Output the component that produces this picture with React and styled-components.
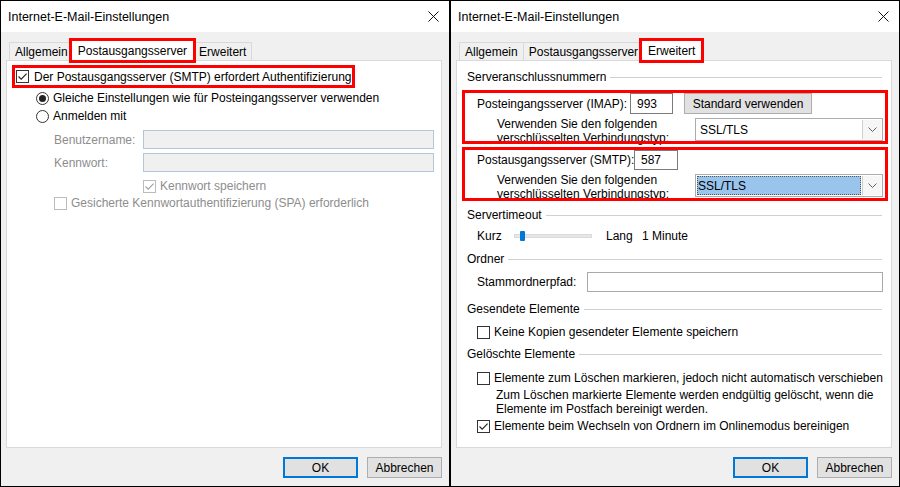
import React from "react";
import styled, { createGlobalStyle, css } from "styled-components";

const GlobalStyle = createGlobalStyle`
  * { box-sizing: border-box; }
  html, body { margin: 0; padding: 0; background: #000; }
  body {
    font-family: "Liberation Sans", Arial, sans-serif;
    font-size: 12px;
    color: #000;
  }
`;

const Screen = styled.div`
  width: 900px;
  height: 487px;
  padding: 1px;
  display: flex;
  gap: 2px;
  background: #000;
`;

const Dialog = styled.section`
  width: 448px;
  height: 485px;
  display: flex;
  flex-direction: column;
  background: #f0f0f0;
`;

const TitleBar = styled.header`
  height: 31px;
  flex: none;
  background: #fff;
  display: flex;
  align-items: center;
  justify-content: space-between;
  padding: 0 10px 0 7px;
`;

const Title = styled.h1`
  margin: 0;
  font-size: 12.5px;
  font-weight: 400;
`;

const CloseIcon = styled.svg`
  width: 11px;
  height: 11px;
  display: block;
`;

const Body = styled.div`
  flex: 1;
  display: flex;
  flex-direction: column;
  padding: 8px 7px 8px 5px;
`;

const TabStrip = styled.div`
  height: 20px;
  flex: none;
  display: flex;
  align-items: flex-end;
  padding-left: 4px;
  position: relative;
  z-index: 1;
`;

const Tab = styled.div`
  height: 18px;
  display: flex;
  align-items: center;
  padding: 0 5px;
  margin-left: -1px;
  border: 1px solid #d9d9d9;
  border-bottom: none;
  background: #f0f0f0;
  white-space: nowrap;
  ${(p) =>
    p.$active &&
    css`
      height: 21px;
      margin: 0 0 -1px -3px;
      padding: 0 6px;
      background: #fff;
      position: relative;
      z-index: 2;
      outline: 3px solid #f00;
      outline-offset: -1px;
    `}
`;

const Panel = styled.div`
  height: 388px;
  flex: none;
  background: #fff;
  border: 1px solid #d9d9d9;
  display: flex;
  flex-direction: column;
`;

const ButtonRow = styled.div`
  display: flex;
  justify-content: flex-end;
  gap: 9px;
  margin-top: 9px;
`;

const DialogButton = styled.button`
  width: 75px;
  height: 21px;
  padding: 0;
  font: inherit;
  color: #000;
  background: #e1e1e1;
  border: 1px solid #adadad;
  ${(p) =>
    p.$default &&
    css`
      border: 2px solid #0078d7;
    `}
`;

/* ---------- controls ---------- */

const BoxMark = styled.span`
  width: 13px;
  height: 13px;
  flex: none;
  display: flex;
  align-items: center;
  justify-content: center;
  background: #fff;
  border: 1px solid ${(p) => (p.$disabled ? "#bcbcbc" : "#333")};
`;

const CheckBox = ({ checked, disabled }) => (
  <BoxMark $disabled={disabled}>
    {checked && (
      <svg width="11" height="11" viewBox="0 0 11 11">
        <path
          d="M1.5 5.5 L4.2 8.2 L9.6 2.6"
          fill="none"
          stroke={disabled ? "#a0a0a0" : "#222"}
          strokeWidth="1.1"
        />
      </svg>
    )}
  </BoxMark>
);

const RadioMark = styled.span`
  width: 13px;
  height: 13px;
  flex: none;
  border-radius: 50%;
  border: 1px solid #333;
  background: #fff;
  display: flex;
  align-items: center;
  justify-content: center;
  &::after {
    content: "";
    width: 7px;
    height: 7px;
    border-radius: 50%;
    background: ${(p) => (p.$checked ? "#222" : "transparent")};
  }
`;

/* ---------- left panel ---------- */

const AuthLine = styled.label`
  align-self: flex-start;
  display: flex;
  align-items: center;
  gap: 5px;
  height: 17px;
  margin: 7px 0 0 8px;
  padding: 0 1px 0 1px;
  outline: 3px solid #f00;
  white-space: nowrap;
`;

const OptionRow = styled.label`
  display: flex;
  align-items: center;
  gap: 4px;
  height: 18px;
  margin: ${(p) => p.$mt || 0}px 0 0 29px;
`;

const FieldRow = styled.div`
  display: flex;
  align-items: center;
  height: 19px;
  margin: ${(p) => p.$mt}px 7px 0 47px;
`;

const FieldLabel = styled.span`
  width: 89px;
  flex: none;
  color: #8d8d8d;
`;

const DisabledInput = styled.div`
  flex: 1;
  height: 19px;
  background: #f0f0f0;
  border: 1px solid #b4c6d8;
`;

const CheckRow = styled.label`
  display: flex;
  align-items: center;
  gap: 4px;
  height: 16px;
  margin: ${(p) => p.$mt}px 0 0 ${(p) => p.$indent}px;
  color: ${(p) => (p.$disabled ? "#8d8d8d" : "#000")};
  white-space: nowrap;
`;

/* ---------- right panel ---------- */

const GroupHeader = styled.div`
  display: flex;
  align-items: center;
  gap: 4px;
  height: 16px;
  margin: ${(p) => p.$mt}px 9px 0 10px;
  white-space: nowrap;
  &::after {
    content: "";
    flex: 1;
    height: 1px;
    background: #d0d0d0;
  }
`;

const PortGroup = styled.div`
  display: flex;
  flex-direction: column;
  gap: 4px;
  margin: ${(p) => p.$mt}px 6px 0 8px;
  padding-bottom: ${(p) => p.$pb || 0}px;
  outline: 3px solid #f00;
`;

const PortRow = styled.div`
  display: flex;
  align-items: center;
  height: ${(p) => p.$h}px;
  padding-left: 12px;
`;

const PortLabel = styled.span`
  width: ${(p) => p.$w}px;
  flex: none;
  white-space: nowrap;
`;

const PortInput = styled.div`
  width: ${(p) => p.$w}px;
  height: ${(p) => p.$h}px;
  flex: none;
  display: flex;
  align-items: center;
  padding-left: 6px;
  background: #fff;
  border: 1px solid #7a7a7a;
`;

const StandardButton = styled.button`
  width: 128px;
  height: 21px;
  margin-left: 11px;
  padding: 0;
  font: inherit;
  color: #000;
  background: #e1e1e1;
  border: 1px solid #adadad;
`;

const EncRow = styled.div`
  display: flex;
  align-items: center;
  height: 23px;
  padding-left: 32px;
`;

const EncText = styled.div`
  width: 198px;
  flex: none;
  line-height: 14px;
  padding-top: 3px;
  white-space: nowrap;
`;

const Select = styled.div`
  width: 188px;
  height: 23px;
  flex: none;
  display: flex;
  background: #fff;
  border: 1px solid #acacac;
`;

const SelectValue = styled.div`
  flex: 1;
  display: flex;
  align-items: center;
  padding-left: 4px;
  ${(p) =>
    p.$highlight &&
    css`
      margin: 1px 0 1px 1px;
      padding-left: 1px;
      background: #99c4ec;
      outline: 1px dotted #555;
      outline-offset: -1px;
    `}
`;

const SelectArrow = styled.div`
  width: 19px;
  margin: 1px;
  display: flex;
  align-items: center;
  justify-content: center;
  background: #f6f6f6;
  border-left: 1px solid #cfcfcf;
`;

const Chevron = () => (
  <svg width="9" height="5" viewBox="0 0 9 5">
    <path d="M0.5 0.5 L4.5 4.5 L8.5 0.5" fill="none" stroke="#606060" strokeWidth="1" />
  </svg>
);

const SliderRow = styled.div`
  display: flex;
  align-items: center;
  height: 16px;
  margin: 5px 0 0 20px;
`;

const SliderLabel = styled.span`
  width: ${(p) => p.$w}px;
  flex: none;
`;

const Track = styled.div`
  position: relative;
  width: 78px;
  height: 4px;
  margin-right: 14px;
  background: #e7e7e7;
  border: 1px solid #dadada;
`;

const Thumb = styled.div`
  position: absolute;
  left: 5px;
  top: -4px;
  width: 5px;
  height: 10px;
  border-radius: 1px;
  background: #0078d7;
`;

const PathRow = styled.div`
  display: flex;
  align-items: center;
  height: 20px;
  margin: 5px 8px 0 20px;
`;

const PathLabel = styled.span`
  width: 110px;
  flex: none;
`;

const PathInput = styled.div`
  flex: 1;
  height: 20px;
  background: #fff;
  border: 1px solid #a9a9a9;
`;

const Note = styled.p`
  margin: 2px 0 0 39px;
  line-height: 14px;
`;

/* ---------- dialog shell ---------- */

const tabs = ["Allgemein", "Postausgangsserver", "Erweitert"];

const DialogShell = ({ active, children }) => (
  <Dialog>
    <TitleBar>
      <Title>Internet-E-Mail-Einstellungen</Title>
      <CloseIcon viewBox="0 0 11 11">
        <path d="M0.5 0.5 L10.5 10.5 M10.5 0.5 L0.5 10.5" stroke="#111" strokeWidth="1" />
      </CloseIcon>
    </TitleBar>
    <Body>
      <TabStrip>
        {tabs.map((t) => (
          <Tab key={t} $active={t === active}>
            {t}
          </Tab>
        ))}
      </TabStrip>
      <Panel>{children}</Panel>
      <ButtonRow>
        <DialogButton $default>OK</DialogButton>
        <DialogButton>Abbrechen</DialogButton>
      </ButtonRow>
    </Body>
  </Dialog>
);

export default function App() {
  return (
    <>
      <GlobalStyle />
      <Screen>
        <DialogShell active="Postausgangsserver">
          <AuthLine>
            <CheckBox checked />
            <span>Der Postausgangsserver (SMTP) erfordert Authentifizierung</span>
          </AuthLine>
          <OptionRow $mt={4}>
            <RadioMark $checked />
            <span>Gleiche Einstellungen wie für Posteingangsserver verwenden</span>
          </OptionRow>
          <OptionRow>
            <RadioMark />
            <span>Anmelden mit</span>
          </OptionRow>
          <FieldRow $mt={5}>
            <FieldLabel>Benutzername:</FieldLabel>
            <DisabledInput />
          </FieldRow>
          <FieldRow $mt={4}>
            <FieldLabel>Kennwort:</FieldLabel>
            <DisabledInput />
          </FieldRow>
          <CheckRow $mt={6} $indent={136} $disabled>
            <CheckBox checked disabled />
            <span>Kennwort speichern</span>
          </CheckRow>
          <CheckRow $mt={1} $indent={47} $disabled>
            <CheckBox disabled />
            <span>Gesicherte Kennwortauthentifizierung (SPA) erforderlich</span>
          </CheckRow>
        </DialogShell>

        <DialogShell active="Erweitert">
          <GroupHeader $mt={8}>Serveranschlussnummern</GroupHeader>
          <PortGroup $mt={8}>
            <PortRow $h={21}>
              <PortLabel $w={153}>Posteingangsserver (IMAP):</PortLabel>
              <PortInput $w={43} $h={21}>993</PortInput>
              <StandardButton>Standard verwenden</StandardButton>
            </PortRow>
            <EncRow>
              <EncText>
                Verwenden Sie den folgenden
                <br />
                verschlüsselten Verbindungstyp:
              </EncText>
              <Select>
                <SelectValue>SSL/TLS</SelectValue>
                <SelectArrow>
                  <Chevron />
                </SelectArrow>
              </Select>
            </EncRow>
          </PortGroup>
          <PortGroup $mt={9} $pb={1}>
            <PortRow $h={20}>
              <PortLabel $w={157}>Postausgangsserver (SMTP):</PortLabel>
              <PortInput $w={44} $h={20}>587</PortInput>
            </PortRow>
            <EncRow>
              <EncText>
                Verwenden Sie den folgenden
                <br />
                verschlüsselten Verbindungstyp:
              </EncText>
              <Select>
                <SelectValue $highlight>SSL/TLS</SelectValue>
                <SelectArrow>
                  <Chevron />
                </SelectArrow>
              </Select>
            </EncRow>
          </PortGroup>
          <GroupHeader $mt={9}>Servertimeout</GroupHeader>
          <SliderRow>
            <SliderLabel $w={37}>Kurz</SliderLabel>
            <Track>
              <Thumb />
            </Track>
            <SliderLabel $w={36}>Lang</SliderLabel>
            <span>1 Minute</span>
          </SliderRow>
          <GroupHeader $mt={7}>Ordner</GroupHeader>
          <PathRow>
            <PathLabel>Stammordnerpfad:</PathLabel>
            <PathInput />
          </PathRow>
          <GroupHeader $mt={9}>Gesendete Elemente</GroupHeader>
          <CheckRow $mt={7} $indent={20}>
            <CheckBox />
            <span>Keine Kopien gesendeter Elemente speichern</span>
          </CheckRow>
          <GroupHeader $mt={6}>Gelöschte Elemente</GroupHeader>
          <CheckRow $mt={8} $indent={20}>
            <CheckBox />
            <span>Elemente zum Löschen markieren, jedoch nicht automatisch verschieben</span>
          </CheckRow>
          <Note>
            Zum Löschen markierte Elemente werden endgültig gelöscht, wenn die
            <br />
            Elemente im Postfach bereinigt werden.
          </Note>
          <CheckRow $mt={2} $indent={20}>
            <CheckBox checked />
            <span>Elemente beim Wechseln von Ordnern im Onlinemodus bereinigen</span>
          </CheckRow>
        </DialogShell>
      </Screen>
    </>
  );
}
